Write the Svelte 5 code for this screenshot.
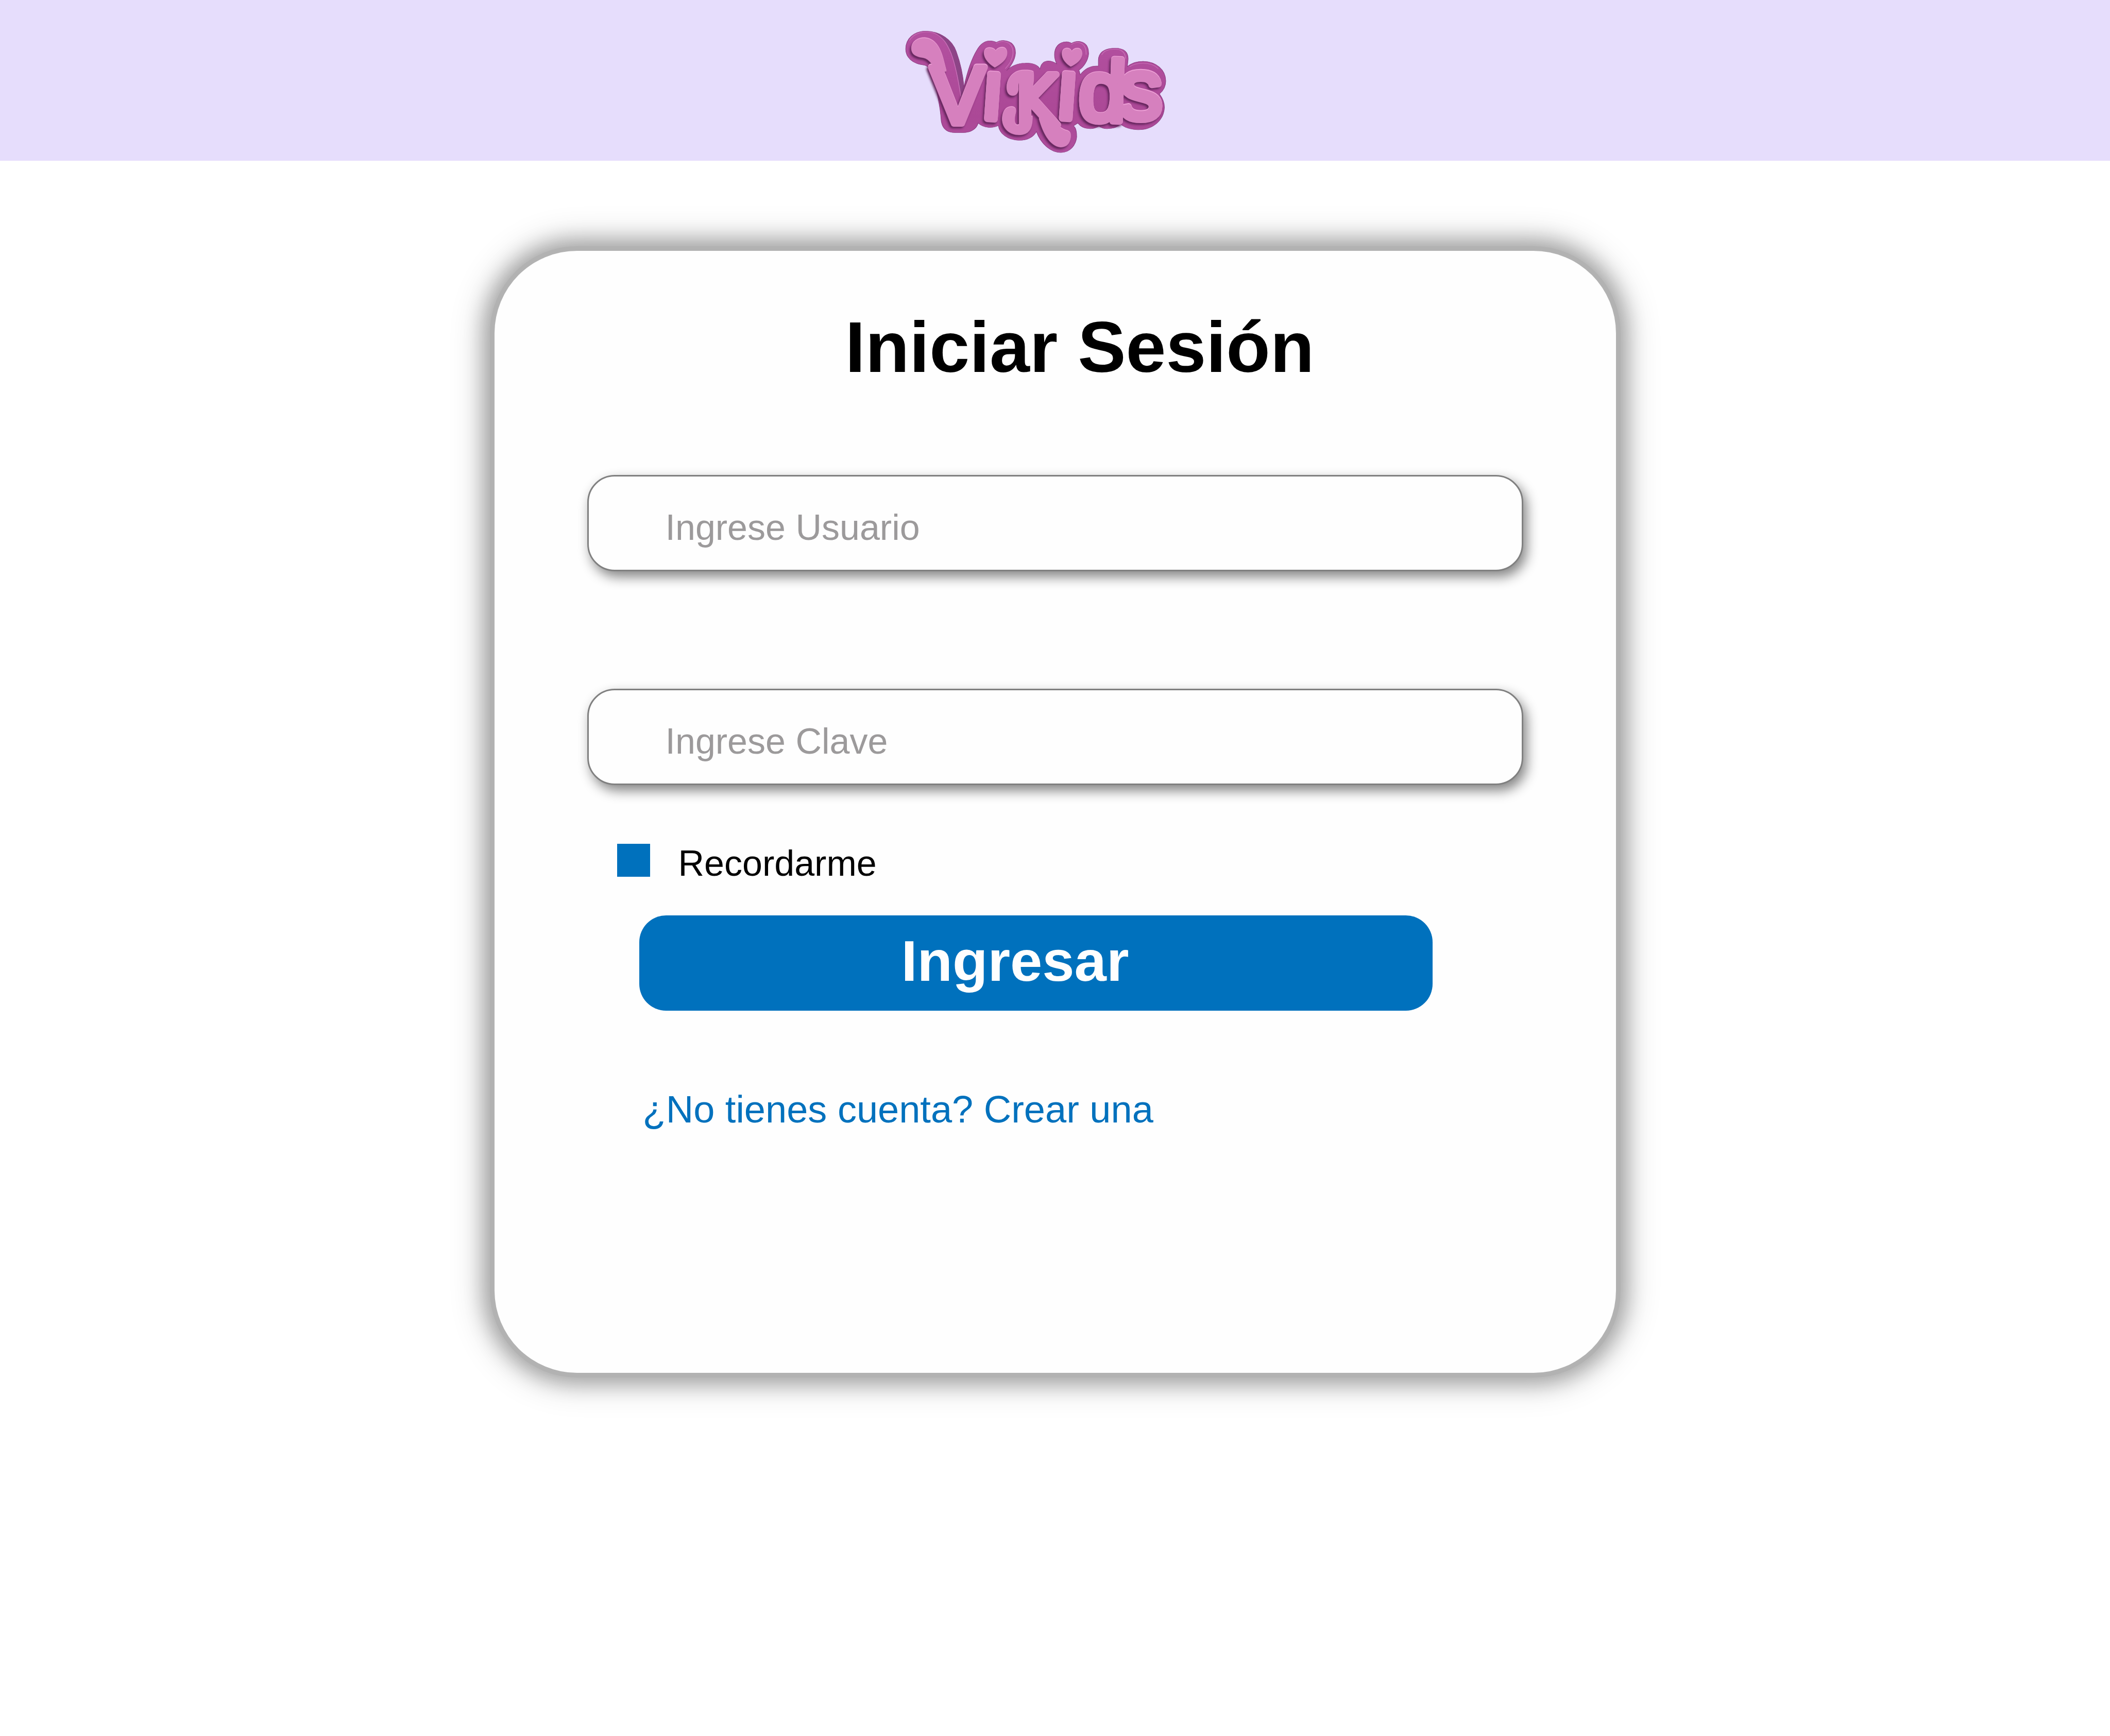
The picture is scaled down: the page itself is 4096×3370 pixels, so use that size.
<script>
  let user = $state('');
  let password = $state('');
  let remember = $state(true);

  const letters = [
    { char: 'V', x: 111, y: 283, size: 219, turn: 0 },
    { char: 'K', x: 341, y: 288, size: 186, turn: 0, condensed: true },
    { char: 'ı', x: 246, y: 271, size: 227, turn: 4 },
    { char: 'ı', x: 448, y: 270, size: 227, turn: 4 },
    { char: 'd', x: 510, y: 275, size: 230, turn: 2 },
    { char: 's', x: 620, y: 270, size: 232, turn: 0 }
  ];
</script>

<header class="topbar">
  <svg class="logo" viewBox="43 34 702 328" role="img" aria-label="ViKids">
    <defs>
      <linearGradient id="plate" x1="0" y1="0" x2="0" y2="1">
        <stop offset="0" stop-color="#b350a0" />
        <stop offset="0.7" stop-color="#ab4896" />
        <stop offset="1" stop-color="#b04f9e" />
      </linearGradient>
      <filter id="soft" x="-10%" y="-10%" width="120%" height="120%">
        <feGaussianBlur stdDeviation="3" />
      </filter>
      <g id="flourishes" transform="scale(0.5102 0.3385)">
        <path d="M115 240C115 190 145 154 185 155C240 160 268 235 283 320L300 420L244 440C232 370 210 322 178 312C135 304 115 280 115 240Z" />
        <path d="M760 425C765 470 762 510 755 560L700 560L702 475C685 485 680 515 680 550C683 590 670 615 650 614C627 612 618 580 619 545C622 470 660 412 710 413C735 413 752 415 760 425Z" />
        <path d="M695 780L755 780C757 870 740 927 685 927C630 927 595 870 595 800C597 740 615 703 645 704C665 705 670 725 667 750C660 790 655 845 675 850C692 850 690 820 695 780Z" />
        <path d="M815 740L868 780C885 865 915 885 940 895C958 905 958 925 957 950C952 1000 935 1025 905 1025C855 1020 815 935 790 800Z" />
      </g>
      <g id="hearts" transform="scale(0.5102 0.3385)">
        <path d="M561 258C568 240 583 230 598 231C614 233 622 255 621 282C618 330 590 360 556 389C525 360 499 320 499 275C500 248 512 233 528 234C543 235 555 243 561 258Z" />
        <path d="M963 262C970 246 982 238 995 239C1011 241 1018 260 1018 286C1014 330 990 358 958 382C932 358 911 322 911 280C912 252 924 238 938 238C951 239 958 248 963 262Z" />
      </g>
    </defs>
    <g transform="scale(0.5102 0.3385)">
      <path
        class="plate"
        d="M85 245C85 160 130 102 190 102C265 102 330 170 352 265C375 360 388 460 393 548C410 430 430 330 462 252C478 210 500 180 530 180Q550 180 565 192Q580 176 602 177C645 180 667 220 665 280C663 330 640 385 618 418C640 380 680 357 715 357C760 355 785 375 795 405C800 365 815 340 840 340C858 341 872 350 884 364C876 340 872 315 872 290C872 230 895 188 935 187Q952 188 962 200Q975 184 1000 184C1040 190 1053 230 1052 285C1048 340 1025 390 1001 413L1008 450C1030 405 1060 380 1095 380L1104 380L1104 335C1104 280 1130 238 1190 238C1240 236 1262 270 1261 325L1257 385C1280 355 1310 343 1340 343C1410 345 1460 410 1460 500C1460 545 1445 580 1427 603C1445 640 1453 670 1453 710C1450 810 1395 888 1315 888C1275 888 1240 870 1220 842C1205 870 1180 880 1150 880Q1125 880 1107 860Q1085 880 1060 880C1030 880 1010 865 995 835L972 858C985 870 989 900 989 945C985 1010 955 1070 905 1070C850 1068 800 1000 776 903C760 950 725 973 685 973C625 970 580 920 575 855C550 875 500 880 468 835C460 880 430 911 390 911L345 911C305 911 280 885 273 820C268 700 245 540 225 450C213 400 200 375 178 372C120 362 85 310 85 245Z"
      />
      <path class="side" d="M235 112C300 130 340 210 352 265C375 360 388 460 393 548L379 640C365 480 345 360 325 280C305 210 280 145 235 112Z" />
      <path class="shine" d="M105 175C130 118 180 95 235 118C285 150 305 210 325 280C345 360 362 480 376 620" />
      <path class="shine" d="M565 200Q580 184 602 185C636 190 655 225 652 285C648 330 635 365 612 400M962 208Q975 192 996 193C1028 198 1040 235 1039 288M1122 290C1135 255 1160 245 1190 246C1225 245 1245 270 1248 320M1270 385C1300 352 1380 340 1420 400" />
    </g>
    {#snippet word()}
      <use href="#flourishes" />
      <use href="#hearts" />
      {#each letters as l}
        <text
          class="glyph"
          class:condensed={l.condensed}
          x={l.x}
          y={l.y}
          font-size={l.size}
          transform="rotate({l.turn} {l.x + l.size / 8} {l.y - 60})">{l.char}</text>
      {/each}
    {/snippet}
    <g class="shade" transform="translate(-4 6)" filter="url(#soft)">{@render word()}</g>
    <g class="edge" transform="translate(-1 2)">{@render word()}</g>
    <g class="glow" transform="translate(0 -1)">{@render word()}</g>
    <g class="face" transform="translate(0 1)">{@render word()}</g>
  </svg>
</header>

<main class="page">
  <form class="card" onsubmit={(e) => e.preventDefault()}>
    <h1 class="title">Iniciar Sesión</h1>
    <div class="fields">
      <input class="field" type="text" placeholder="Ingrese Usuario" aria-label="Usuario" autocomplete="username" bind:value={user} />
      <input class="field" type="password" placeholder="Ingrese Clave" aria-label="Clave" autocomplete="current-password" bind:value={password} />
    </div>
    <label class="remember">
      <input class="tick" type="checkbox" bind:checked={remember} />
      <span>Recordarme</span>
    </label>
    <button class="submit" type="submit">Ingresar</button>
    <a class="signup" href="#crear">¿No tienes cuenta? Crear una</a>
  </form>
</main>

<style>
  :global(body) {
    margin: 0;
    background: #ffffff;
  }

  .topbar {
    display: flex;
    justify-content: center;
    padding: 60px 76px 16px 0;
    background: #e6ddfc;
  }

  .logo {
    display: block;
    width: 505px;
    height: 236px;
    overflow: visible;
  }

  .glyph {
    font-family: "Liberation Sans", Arial, sans-serif;
    stroke-width: 17px;
    stroke-linejoin: round;
  }

  .condensed {
    font-family: "DejaVu Sans Condensed", "Liberation Sans", sans-serif;
  }

  .plate {
    fill: url(#plate);
    stroke: #8c3c80;
    stroke-width: 3px;
  }

  .side {
    fill: #8d4587;
  }

  .shine {
    fill: none;
    stroke: #c971b8;
    stroke-width: 4px;
    stroke-linecap: round;
  }

  .shade {
    fill: #5d2056;
    stroke: #5d2056;
  }

  .edge {
    fill: #74306a;
    stroke: #74306a;
  }

  .glow {
    fill: #eda0d6;
    stroke: #eda0d6;
  }

  .face {
    fill: #d680be;
    stroke: #d680be;
  }

  .page {
    display: flex;
    justify-content: center;
    padding: 175px 48px;
  }

  .card {
    box-sizing: border-box;
    display: flex;
    flex-direction: column;
    width: 100%;
    max-width: 2177px;
    padding: 103px 180px 463px;
    border-radius: 160px;
    background: #fefefe;
    box-shadow:
      0 0 0 9px #b2b2b2,
      0 0 36px 22px rgba(0, 0, 0, 0.25),
      0 0 64px 27px rgba(0, 0, 0, 0.16);
    font-family: "Liberation Sans Narrow", "Arial Narrow", "Liberation Sans", sans-serif;
    font-size: 70px;
  }

  .title {
    margin: 0 0 166px;
    padding: 2px 0 0 96px;
    color: #000000;
    font-family: "Arial Rounded MT Bold", "Liberation Sans", Arial, sans-serif;
    font-size: 140px;
    font-weight: 700;
    line-height: 164px;
    text-align: center;
  }

  .fields {
    display: flex;
    flex-direction: column;
    gap: 228px;
  }

  .field {
    box-sizing: border-box;
    width: 100%;
    height: 187px;
    padding: 16px 60px 0 149px;
    border: 3px solid #808080;
    border-radius: 53px;
    background: #fefefe;
    box-shadow: 7px 11px 23px rgba(0, 0, 0, 0.48);
    color: #000000;
    font: inherit;
  }

  .field::placeholder {
    color: #9c9a9b;
    opacity: 1;
  }

  .remember {
    display: flex;
    align-items: flex-start;
    align-self: flex-start;
    gap: 55px;
    margin: 114px 0 63px 58px;
    color: #000000;
    line-height: 76px;
  }

  .tick {
    appearance: none;
    flex: none;
    width: 64px;
    height: 64px;
    margin: 0;
    border: 4px solid #0071bd;
    background: #fefefe;
  }

  .tick:checked {
    background: #0071bd;
  }

  .submit {
    height: 185px;
    margin: 0 176px 0 101px;
    padding: 0 80px 9px 0;
    border: 0;
    border-radius: 52px;
    background: #0071bd;
    color: #fefefe;
    font-family: "Arial Rounded MT Bold", "Liberation Sans", Arial, sans-serif;
    font-size: 112px;
    font-weight: 700;
  }

  .signup {
    align-self: flex-start;
    margin: 144px 0 0 108px;
    color: #0071bd;
    font-size: 74px;
    line-height: 96px;
    text-decoration: none;
  }
</style>
